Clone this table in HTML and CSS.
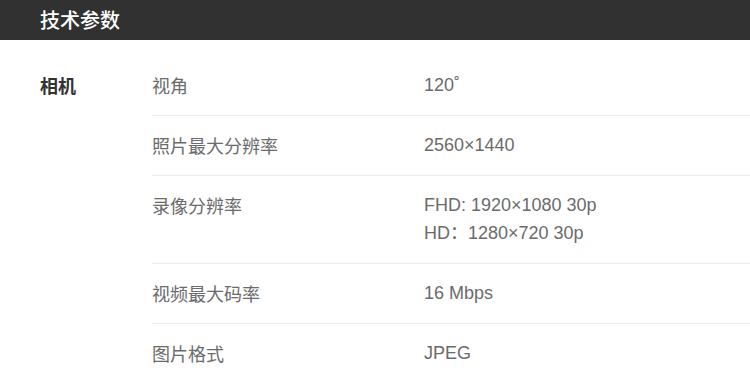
FILE: index.html
```html
<!DOCTYPE html>
<html lang="zh-CN">
<head>
<meta charset="utf-8">
<link rel="stylesheet" href="styles.css">
</head>
<body>
<header class="bar"><h2 class="bar-title">技术参数</h2></header>
<section class="group">
  <div class="group-label">相机</div>
  <div class="rows">
    <div class="row"><div class="name">视角</div><div class="value">120˚</div></div>
    <div class="row"><div class="name">照片最大分辨率</div><div class="value">2560×1440</div></div>
    <div class="row"><div class="name">录像分辨率</div><div class="value">FHD: 1920×1080 30p<br>HD：1280×720 30p</div></div>
    <div class="row"><div class="name">视频最大码率</div><div class="value">16 Mbps</div></div>
    <div class="row"><div class="name">图片格式</div><div class="value">JPEG</div></div>
  </div>
</section>
</body>
</html>
```
FILE: styles.css
```css
html, body { margin: 0; padding: 0; background: #fff; }
body {
  font-family: "Liberation Sans", "Noto Sans CJK SC", sans-serif;
  width: 750px;
  overflow: hidden;
}
.bar {
  height: 40px;
  background: #313131;
  display: flex;
  align-items: center;
  padding-left: 40px;
}
.bar-title {
  margin: 0;
  color: #fff;
  font-size: 20px;
  font-weight: 500;
  font-family: "Noto Sans CJK SC", sans-serif;
  line-height: 1;
}
.group {
  display: flex;
  padding: 16px 0 0 40px;
}
.group-label {
  width: 112px;
  flex: none;
  padding-top: 15px;
  line-height: 28px;
  font-size: 18px;
  font-weight: 700;
  color: #333;
  font-family: "Noto Sans CJK SC", sans-serif;
}
.rows { flex: 1; }
.row {
  display: flex;
  padding: 15px 0 16px;
  border-bottom: 1px solid #ececec;
  line-height: 28px;
  font-size: 18px;
  color: #6b6b6b;
}
.name {
  width: 272px;
  flex: none;
  font-family: "Noto Sans CJK SC", sans-serif;
}
.value { color: #6b6b6b; }
```
